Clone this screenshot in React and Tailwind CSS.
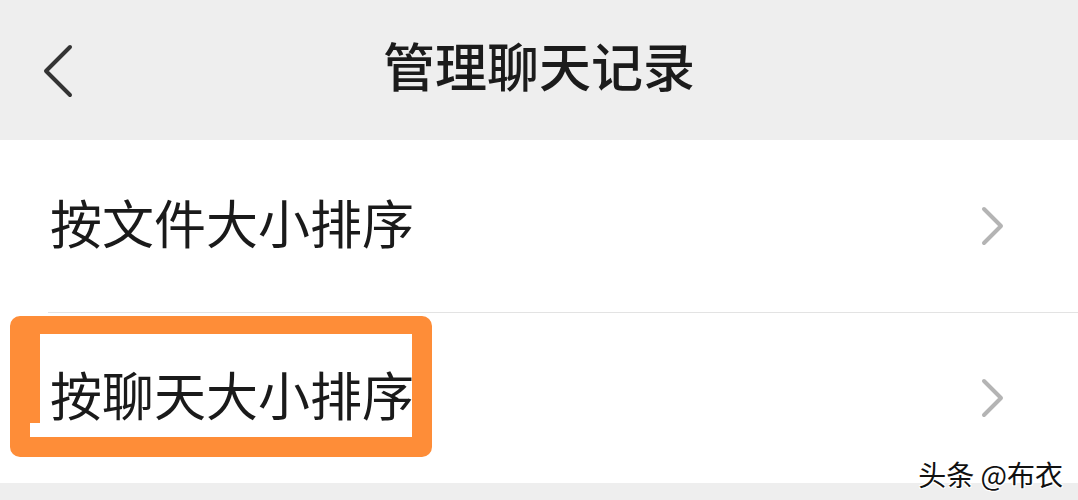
const rows = [
  { label: '按文件大小排序', highlighted: false },
  { label: '按聊天大小排序', highlighted: true },
];

function ChevronRight() {
  return (
    <svg width="26" height="40" viewBox="0 0 26 40" fill="none" aria-hidden="true">
      <path d="M4 3 L21 20 L4 37" stroke="#b4b4b4" strokeWidth="4" strokeLinecap="round" strokeLinejoin="round" />
    </svg>
  );
}

function ChevronLeft() {
  return (
    <svg width="34" height="56" viewBox="0 0 34 56" fill="none" aria-hidden="true">
      <path d="M29 4 L5 28 L29 52" stroke="#333333" strokeWidth="4" strokeLinecap="round" strokeLinejoin="round" />
    </svg>
  );
}

export default function App() {
  return (
    <div className="w-[1078px] h-[500px] overflow-hidden bg-[#eeeeee] font-['Noto_Sans_CJK_SC','Noto_Sans',sans-serif]">
      <header className="h-[140px] grid grid-cols-[1fr_auto_1fr] items-center">
        <div className="pl-[41px] pt-[2px] flex items-center">
          <ChevronLeft />
        </div>
        <h1 className="text-[52px] leading-none font-medium text-[#1b1b1b] pb-[10px]">管理聊天记录</h1>
        <div />
      </header>

      <div className="bg-white">
        {rows.map((row, i) => (
          <div key={row.label}>
            {i > 0 && <div className="ml-[48px] h-px bg-[#e3e3e3]" />}
            <div
              className={
                'relative flex items-center justify-between pl-[50px] pr-[72px] ' +
                (i === 0 ? 'h-[172px]' : 'h-[170px]')
              }
            >
              {row.highlighted && (
                <>
                  <div className="absolute left-[10px] top-[3px] w-[422px] h-[141px] rounded-[10px] bg-white border-[#fe8d38] border-t-[18px] border-l-[30px] border-r-[20px] border-b-[20px]" />
                  <div className="absolute left-[30px] top-[110px] w-[12px] h-[14px] bg-white" />
                </>
              )}
              <span className="relative text-[52px] leading-none text-[#1a1a1a] pb-[8px]">{row.label}</span>
              <div className="relative">
                <ChevronRight />
              </div>
            </div>
          </div>
        ))}
      </div>

      <div className="relative h-[17px]">
        <span className="absolute right-[15px] bottom-[12px] text-[28px] leading-none text-[#111] whitespace-nowrap [text-shadow:1px_1px_0_#fff,-1px_-1px_0_#fff,1px_-1px_0_#fff,-1px_1px_0_#fff]">
          头条 @布衣
        </span>
      </div>
    </div>
  );
}
